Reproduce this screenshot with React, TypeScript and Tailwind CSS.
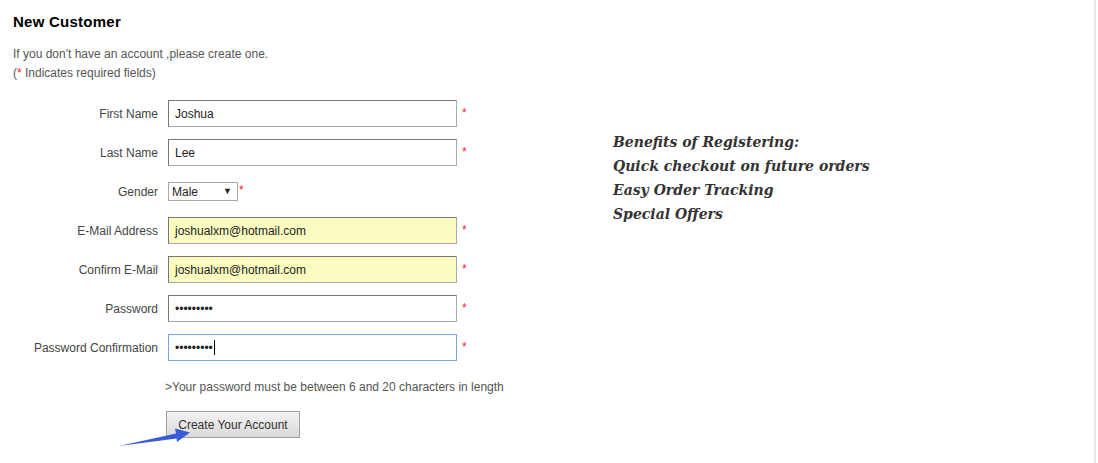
import React from "react";

/* ------------------------------------------------------------------ */
/*                               Fields                               */
/* ------------------------------------------------------------------ */

type Field = {
  label: string;
  value: string;
  type?: "text" | "password";
  autofill?: boolean;
  focused?: boolean;
};

const FIELDS_TOP: Field[] = [
  { label: "First Name", value: "Joshua" },
  { label: "Last Name", value: "Lee" },
];

const FIELDS_BOTTOM: Field[] = [
  { label: "E-Mail Address", value: "joshualxm@hotmail.com", autofill: true },
  { label: "Confirm E-Mail", value: "joshualxm@hotmail.com", autofill: true },
  { label: "Password", value: "•••••••••", type: "password" },
  { label: "Password Confirmation", value: "•••••••••", type: "password", focused: true },
];

const Star = ({ className = "" }: { className?: string }) => (
  <span className={`text-[#ff1a1a] text-[12px] leading-none ${className}`}>*</span>
);

const Row = ({ children, label }: { children: React.ReactNode; label: string }) => (
  <div className="flex h-[39px] items-center">
    <label className="w-[145px] text-right text-[12px] text-[#444]">{label}</label>
    <div className="ml-[10px] flex items-center">{children}</div>
  </div>
);

const TextInput = ({ field }: { field: Field }) => {
  const base =
    "flex h-[27px] w-[289px] items-center border px-[6px] text-[12px] text-[#222]";
  const border = field.focused
    ? "border-[#7aa6e8]"
    : "border-t-[#767676] border-l-[#767676] border-r-[#a9a9a9] border-b-[#a9a9a9]";
  const bg = field.autofill ? "bg-[#fafcc0]" : "bg-white";
  return (
    <div className={`${base} ${border} ${bg}`}>
      {field.type === "password" ? (
        <span className="flex items-center">
          <span className="text-[12px] leading-none text-[#222]">{field.value}</span>
          {field.focused && <span className="ml-[1px] h-[15px] w-px bg-black" />}
        </span>
      ) : (
        <span>{field.value}</span>
      )}
    </div>
  );
};

/* ------------------------------------------------------------------ */
/*                                Page                                */
/* ------------------------------------------------------------------ */

export default function App() {
  return (
    <div
      className="relative h-[463px] w-[1098px] overflow-hidden bg-white"
      style={{ fontFamily: '"Liberation Sans", Arial, sans-serif' }}
    >
      <div className="flex h-full w-[1096px] border-r-2 border-[#e8e8e8]">
        {/* Left: form */}
        <div className="w-[600px] px-[13px] pt-[14px]">
          <h2 className="text-[15px] font-bold leading-[16px] tracking-[0.25px] text-black">
            New Customer
          </h2>
          <div className="mt-[15px] text-[12px] leading-[19px] text-[#555]">
            <p>If you don't have an account ,please create one.</p>
            <p>
              (<span className="text-[#ff1a1a]">*</span> Indicates required fields)
            </p>
          </div>

          <form className="mt-[11px]">
            {FIELDS_TOP.map((f) => (
              <Row key={f.label} label={f.label}>
                <TextInput field={f} />
                <Star className="ml-[5px] -mt-[1px]" />
              </Row>
            ))}
            <Row label="Gender">
              <div className="flex h-[19px] w-[70px] items-center justify-between border border-[#a9a9a9] bg-white pl-[3px] pr-[5px] text-[12px] text-[#222]">
                <span>Male</span>
                <span className="text-[9px] leading-none">▼</span>
              </div>
              <Star className="ml-[1px] -mt-[3px]" />
            </Row>
            {FIELDS_BOTTOM.map((f) => (
              <Row key={f.label} label={f.label}>
                <TextInput field={f} />
                <Star className="ml-[5px] -mt-[1px]" />
              </Row>
            ))}

            <p className="ml-[152px] mt-[11px] text-[12px] leading-[19px] text-[#555]">
              &gt;Your password must be between 6 and 20 characters in length
            </p>

            <button
              type="button"
              className="ml-[153px] mt-[14px] h-[27px] w-[134px] border border-[#a0a0a0] bg-gradient-to-b from-[#f2f2f2] to-[#dadada] text-[12px] text-[#333]"
            >
              Create Your Account
            </button>
          </form>
        </div>

        {/* Right: benefits */}
        <div
          className="pl-[13px] pt-[130px] text-[14px] font-bold italic leading-[24px] text-[#333]"
          style={{ fontFamily: '"DejaVu Serif", Georgia, serif' }}
        >
          <p>Benefits of Registering:</p>
          <p>Quick checkout on future orders</p>
          <p>Easy Order Tracking</p>
          <p>Special Offers</p>
        </div>
      </div>

      {/* Annotation arrow */}
      <svg className="absolute left-0 top-0" width="1098" height="463" viewBox="0 0 1098 463">
        <polygon
          points="119,446 176,433.5 175,428.5 190,432.5 177,442 176.5,438.5"
          fill="#3a5ad8"
        />
      </svg>
    </div>
  );
}
